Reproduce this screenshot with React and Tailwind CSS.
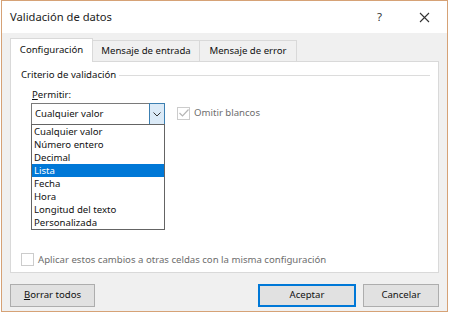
import React from "react";

const F = { fontFamily: '"Noto Sans", "Open Sans", sans-serif' };

export default function App() {
  const items = [
    "Cualquier valor",
    "Número entero",
    "Decimal",
    "Lista",
    "Fecha",
    "Hora",
    "Longitud del texto",
    "Personalizada",
  ];
  return (
    <div className="w-[450px] h-[317px] bg-white text-[9.6px] text-[#111]" style={F}>
      <div className="ml-[1px] w-[447px] h-[312px] border border-[#d6a276] bg-[#f0f0f0] flex flex-col">
        {/* title bar */}
        <div className="h-[32px] bg-white flex items-center pl-[8px] pr-[14px] shrink-0">
          <span className="text-[11.2px] text-[#222]">Validación de datos</span>
          <span className="ml-auto text-[11.5px] text-[#333] mr-[37px]">?</span>
          <svg width="11" height="11" viewBox="0 0 11 11" className="mr-[3px]">
            <path d="M1 1 L10 10 M10 1 L1 10" stroke="#333" strokeWidth="1.1" fill="none" />
          </svg>
        </div>
        {/* body */}
        <div className="px-[8px] pt-[5px] flex flex-col">
          {/* tabs */}
          <div className="flex items-end h-[23px] relative z-10">
            <div className="w-[83px] h-[24px] bg-white border border-[#d9d9d9] border-b-0 flex items-center justify-center -mb-[1px]">
              Configuración
            </div>
            <div className="w-[107px] h-[21px] bg-[#f0f0f0] border border-[#d9d9d9] border-l-0 border-b-0 flex items-center justify-center">
              Mensaje de entrada
            </div>
            <div className="w-[97px] h-[21px] bg-[#f0f0f0] border border-[#d9d9d9] border-l-0 border-b-0 flex items-center justify-center">
              Mensaje de error
            </div>
          </div>
          {/* panel */}
          <div className="h-[212px] bg-white border border-[#d9d9d9] flex flex-col pl-[10px] pr-[8px]">
            <div className="flex items-center gap-[3px] mt-[5px] h-[16px]">
              <span>Criterio de validación</span>
              <div className="flex-1 h-px bg-[#dcdcdc]" />
            </div>
            <div className="ml-[11px] mt-[4px] h-[16px] flex items-center">
              <span><span className="underline">P</span>ermitir:</span>
            </div>
            <div className="ml-[10px] flex items-start">
              <div className="relative">
                <div className="w-[134px] h-[22px] border border-[#7a7a7a] flex items-center bg-white">
                  <span className="pl-[3px] flex-1">Cualquier valor</span>
                  <div className="w-[16px] h-[22px] -my-px -mr-px border border-[#3c7fb1] bg-[#dbeaf7] flex items-center justify-center">
                    <svg width="8" height="5" viewBox="0 0 8 5">
                      <path d="M0.5 0.5 L4 4 L7.5 0.5" stroke="#333" strokeWidth="1" fill="none" />
                    </svg>
                  </div>
                </div>
                <div className="absolute left-0 top-[21px] w-[134px] border border-[#646464] bg-white flex flex-col">
                  {items.map((it) => (
                    <div
                      key={it}
                      className={
                        "h-[13px] leading-[13px] pl-[2px] " +
                        (it === "Lista" ? "bg-[#0078d7] text-white" : "")
                      }
                    >
                      {it}
                    </div>
                  ))}
                </div>
              </div>
              <div className="ml-[12px] mt-[3px] flex items-center gap-[4px] text-[#6d6d6d]">
                <div className="w-[13px] h-[13px] border border-[#cccccc] flex items-center justify-center">
                  <svg width="10" height="8" viewBox="0 0 10 8">
                    <path d="M0.5 4 L3.5 7 L9.5 0.5" stroke="#b5b5b5" strokeWidth="1.2" fill="none" />
                  </svg>
                </div>
                <span>Omitir blancos</span>
              </div>
            </div>
            <div className="mt-auto mb-[5px] flex items-center gap-[4px] text-[#6d6d6d]">
              <div className="w-[13px] h-[13px] border border-[#cccccc] bg-white" />
              <span>Aplicar estos cambios a otras celdas con la misma configuración</span>
            </div>
          </div>
          {/* buttons */}
          <div className="flex mt-[11px] h-[23px]">
            <div className="w-[85px] h-[23px] border border-[#adadad] bg-[#e1e1e1] flex items-center justify-center">
              <span><span className="underline">B</span>orrar todos</span>
            </div>
            <div className="ml-auto w-[98px] h-[23px] border-2 border-[#0078d7] bg-[#e1e1e1] flex items-center justify-center">
              Aceptar
            </div>
            <div className="ml-[7px] w-[76px] h-[23px] border border-[#adadad] bg-[#e1e1e1] flex items-center justify-center">
              Cancelar
            </div>
          </div>
        </div>
      </div>
    </div>
  );
}
